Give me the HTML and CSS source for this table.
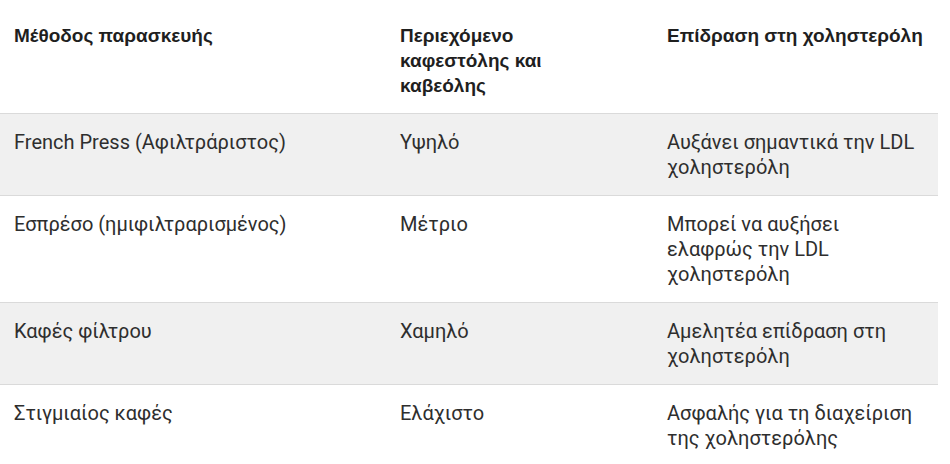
FILE: index.html
```html
<!DOCTYPE html>
<html lang="el">
<head>
<meta charset="utf-8">
<link rel="stylesheet" href="styles.css">
</head>
<body>
<table class="tbl">
  <colgroup>
    <col class="c1">
    <col class="c2">
    <col class="c3">
  </colgroup>
  <thead>
    <tr>
      <th>Μέθοδος παρασκευής</th>
      <th><div class="narrow">Περιεχόμενο καφεστόλης και καβεόλης</div></th>
      <th>Επίδραση στη χοληστερόλη</th>
    </tr>
  </thead>
  <tbody>
    <tr class="alt">
      <td>French Press (Αφιλτράριστος)</td>
      <td>Υψηλό</td>
      <td>Αυξάνει σημαντικά την LDL χοληστερόλη</td>
    </tr>
    <tr>
      <td>Εσπρέσο (ημιφιλτραρισμένος)</td>
      <td>Μέτριο</td>
      <td>Μπορεί να αυξήσει ελαφρώς την LDL χοληστερόλη</td>
    </tr>
    <tr class="alt">
      <td>Καφές φίλτρου</td>
      <td>Χαμηλό</td>
      <td>Αμελητέα επίδραση στη χοληστερόλη</td>
    </tr>
    <tr>
      <td>Στιγμιαίος καφές</td>
      <td>Ελάχιστο</td>
      <td>Ασφαλής για τη διαχείριση της χοληστερόλης</td>
    </tr>
  </tbody>
</table>
</body>
</html>
```
FILE: styles.css
```css
html, body {
  margin: 0;
  padding: 0;
  background: #ffffff;
}
body {
  padding-top: 7px;
  font-family: Roboto, "Noto Sans", sans-serif;
  color: #1f1f1f;
}
.tbl {
  width: 938px;
  border-collapse: collapse;
  table-layout: fixed;
}
.c1 { width: 386px; }
.c2 { width: 267px; }
.c3 { width: 285px; }
.tbl th,
.tbl td {
  text-align: left;
  vertical-align: top;
  padding: 16px 14px 15px 14px;
  font-size: 20px;
  line-height: 25px;
}
.tbl td {
  color: #2e2e2e;
}
.tbl th {
  font-family: "Liberation Sans", Arial, sans-serif;
  font-weight: bold;
  font-size: 19px;
  color: #1f1f1f;
}
.tbl tr {
  border-bottom: 1px solid #dadada;
}
.tbl tbody tr:last-child {
  border-bottom: none;
}
.tbl tr.alt {
  background: #f0f0f0;
}
.narrow {
  max-width: 190px;
}
```
